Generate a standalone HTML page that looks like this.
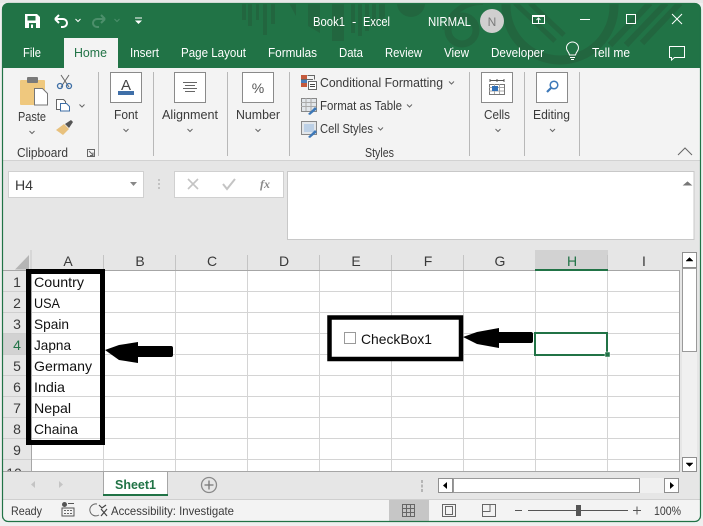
<!DOCTYPE html>
<html><head><meta charset="utf-8"><style>
html,body{margin:0;padding:0;background:#efefef;width:703px;height:526px;overflow:hidden}
svg{display:block;position:absolute;left:0;top:0}
text{font-family:"Liberation Sans",sans-serif;font-size:13px;fill:#3a3a3a}
.w{fill:#fff}.c{fill:#111;font-size:14px}.h{fill:#3a3a3a;font-size:14px;text-anchor:middle}
.g{stroke:#d4d4d4;stroke-width:1;fill:none}
.sep{stroke:#b8b8b8;stroke-width:1}
.btn{fill:#fff;stroke:#8a8a8a;stroke-width:1}
.chev{fill:none;stroke:#666;stroke-width:1}
.ic{fill:none;stroke:#666;stroke-width:1}
.wl{fill:none;stroke:#fff;stroke-width:1}
</style></head><body>
<svg width="703" height="526" viewBox="0 0 703 526" xmlns="http://www.w3.org/2000/svg">
<defs><clipPath id="tb"><rect x="2" y="3" width="699" height="66" rx="6"/></clipPath></defs>
<rect width="703" height="526" fill="#efefef"/>
<rect x="0" y="0" width="703" height="3" fill="#e8e8e8"/>
<rect x="2" y="3" width="699" height="519" rx="6" fill="#217346"/>
<rect x="3" y="68" width="697" height="452" fill="#e6e6e6"/>
<!-- title pattern -->
<g clip-path="url(#tb)">
<g fill="#22663f">
<rect x="242" y="3" width="4" height="17"/><rect x="248" y="3" width="4" height="23"/><rect x="256" y="3" width="3" height="17"/><rect x="263" y="3" width="4" height="32"/><rect x="271" y="3" width="4" height="21"/>
<path d="M289 3h7v13zM308 3h12v30l-12-7zM332 3h12v38h-12zM351 3h4v30h-4zM358 3h4v33h-4zM365 3h4v28h-4zM372 3h4v24h-4zM379 3h6v14l-6 5z"/>
<circle cx="411" cy="3" r="14"/>
</g>
<g fill="none" stroke="#22663f">
<circle cx="560" cy="6" r="54" stroke-width="9"/>
<circle cx="462" cy="30" r="14" stroke-width="7"/>
<path d="M445 30a38 38 0 0 1 38-28" stroke-width="6"/>
<path d="M515 3l40 38M530 3l34 32" stroke-width="5"/>
<path d="M650 3l-40 42M666 3l-40 42M680 3l-38 40" stroke-width="6"/>
</g>
</g>
<!-- QAT -->
<path d="M25 14h12l3 3v11h-15z" fill="#fff"/>
<rect x="27.500" y="16" width="8" height="4.500" fill="#217346"/><rect x="29" y="23" width="7" height="5" fill="#217346"/><rect x="31" y="24.500" width="2" height="3.500" fill="#fff"/>
<path d="M55 19h8a4 4 0 0 1 0 8h-2M55 19l4-4M55 19l4 4" fill="none" stroke="#fff" stroke-width="2"/>
<path d="M75.500 19l2.500 2.500 2.500-2.500" class="wl"/>
<path d="M105 19h-8a4 4 0 0 0 0 8h2M105 19l-4-4M105 19l-4 4" fill="none" stroke="#4c8f6b" stroke-width="2"/>
<path d="M114.500 19l2.500 2.500 2.500-2.500" fill="none" stroke="#4c8f6b"/>
<path d="M135 18h7" stroke="#fff"/><path d="M135 20.500h7l-3.500 3.500z" fill="#fff"/>
<text class="w" x="313" y="26" textLength="32" lengthAdjust="spacingAndGlyphs">Book1</text>
<text class="w" x="352" y="26">-</text>
<text class="w" x="363" y="26" textLength="27" lengthAdjust="spacingAndGlyphs">Excel</text>
<text class="w" x="428" y="26" textLength="43" lengthAdjust="spacingAndGlyphs">NIRMAL</text>
<circle cx="492" cy="21" r="12" fill="#d0cfcf"/>
<text x="492" y="26" text-anchor="middle" style="font-size:12px;fill:#7a7a7a">N</text>
<!-- window controls -->
<rect x="532.500" y="15.500" width="12" height="8" class="wl"/><path d="M532 16.500h13M538.500 23v-5M536.500 20l2-2 2 2" class="wl"/>
<path d="M580 19.500h10" class="wl"/>
<rect x="626.500" y="14.500" width="9" height="9" class="wl"/>
<path d="M672 14l10 10M682 14l-10 10" class="wl"/>
<!-- tabs -->
<rect x="64" y="38" width="54" height="31" fill="#f3f3f3"/>
<text class="w" x="23" y="57" textLength="18" lengthAdjust="spacingAndGlyphs">File</text>
<text x="74" y="57" textLength="33" lengthAdjust="spacingAndGlyphs" style="fill:#217346">Home</text>
<text class="w" x="130" y="57" textLength="29" lengthAdjust="spacingAndGlyphs">Insert</text>
<text class="w" x="181" y="57" textLength="65" lengthAdjust="spacingAndGlyphs">Page Layout</text>
<text class="w" x="268" y="57" textLength="49" lengthAdjust="spacingAndGlyphs">Formulas</text>
<text class="w" x="339" y="57" textLength="24" lengthAdjust="spacingAndGlyphs">Data</text>
<text class="w" x="385" y="57" textLength="37" lengthAdjust="spacingAndGlyphs">Review</text>
<text class="w" x="444" y="57" textLength="25" lengthAdjust="spacingAndGlyphs">View</text>
<text class="w" x="491" y="57" textLength="53" lengthAdjust="spacingAndGlyphs">Developer</text>
<text class="w" x="592" y="57" textLength="38" lengthAdjust="spacingAndGlyphs">Tell me</text>
<path d="M569.500 55c-.5-3-3-4-3-7a6 6 0 0 1 12 0c0 3-2.500 4-3 7zM570 57.500h5M571 59.500h3" class="wl"/>
<path d="M669.500 46.500h15v11h-10l-3 2.500v-2.500h-2z" class="wl"/>
<!-- ribbon -->
<rect x="3" y="68" width="697" height="92" fill="#f3f3f3"/>
<path d="M3 160.500h697" stroke="#d2d2d2"/>
<g class="sep"><path d="M98.500 72v84M153.500 72v84M227.500 72v84M289.500 72v84M469.500 72v84M524.500 72v84M579.500 72v84"/></g>
<!-- paste -->
<rect x="20" y="80" width="25" height="25" rx="1" fill="#efc87e"/>
<rect x="27" y="77" width="11" height="6" rx="1" fill="#7a7a7a"/>
<path d="M34.500 88.500h8l5 5v11.500h-13z" fill="#fff" stroke="#777"/>
<path d="M61 75l8 12M69 75l-8 12" stroke="#666" fill="none"/><circle cx="60" cy="86" r="2.500" fill="none" stroke="#3d6ea5" stroke-width="1.300"/><circle cx="69" cy="86" r="2.500" fill="none" stroke="#3d6ea5" stroke-width="1.300"/>
<path d="M56.500 99.500h7l2 2v8h-9z" fill="#fff" stroke="#666"/><path d="M60.500 103.500h6l3 3v4.500h-9z" fill="#fff" stroke="#3d6ea5"/>
<path d="M79.500 104.500l2.500 2.500 2.500-2.500" class="chev"/>
<path d="M56 130l8-6 5 5-6 6z" fill="#e8c17d"/><path d="M65 124l6-4 2 2-4 6z" fill="#555"/>
<text x="18" y="121" textLength="28" lengthAdjust="spacingAndGlyphs">Paste</text>
<path d="M29.500 131l2.500 2.500 2.500-2.500" class="chev"/>
<text x="17" y="157" textLength="51" lengthAdjust="spacingAndGlyphs">Clipboard</text>
<path d="M87.500 149.500h7v7h-7zM89 151l4 4M93 152.500v3h-3" class="ic"/>
<!-- font -->
<rect class="btn" x="110.500" y="72.500" width="31" height="30"/>
<text x="126" y="90" text-anchor="middle" style="font-size:15px;fill:#444">A</text>
<rect x="118" y="91" width="16" height="4" fill="#3f6fa8"/>
<text x="114" y="119" textLength="24" lengthAdjust="spacingAndGlyphs">Font</text>
<path d="M123.500 129l2.500 2.500 2.500-2.500" class="chev"/>
<!-- alignment -->
<rect class="btn" x="174.500" y="72.500" width="31" height="30"/>
<path d="M183 82.500h14M185 85.500h10M183 88.500h14M185 91.500h10" class="ic"/>
<text x="162" y="119" textLength="56" lengthAdjust="spacingAndGlyphs">Alignment</text>
<path d="M187.500 129l2.500 2.500 2.500-2.500" class="chev"/>
<!-- number -->
<rect class="btn" x="242.500" y="72.500" width="31" height="30"/>
<text x="258" y="93" text-anchor="middle" style="font-size:14px;fill:#555">%</text>
<text x="236" y="119" textLength="44" lengthAdjust="spacingAndGlyphs">Number</text>
<path d="M255.500 129l2.500 2.500 2.500-2.500" class="chev"/>
<!-- styles -->
<rect x="301" y="75" width="6" height="4" fill="#c55a3c"/><rect x="301" y="79" width="6" height="4" fill="#4a7ebb"/><rect x="301" y="83" width="6" height="4" fill="#c55a3c"/>
<path d="M307.500 75.500h7v4M301 79.500h12" class="ic"/><rect x="308.500" y="81.500" width="8" height="8" fill="#fff" stroke="#666"/><path d="M310 84.500h5M310 86.500h5" stroke="#444"/>
<rect x="301.500" y="98.500" width="15" height="13" fill="#e2e6ea" stroke="#888"/><path d="M306 98v13M311 98v13M301 102.500h15M301 106.500h15" stroke="#aaa"/><path d="M308 114l7-7 2 2-7 6z" fill="#3d78b8"/>
<rect x="301.500" y="121.500" width="15" height="13" fill="#e2e6ea" stroke="#888"/><rect x="304" y="124" width="10" height="8" fill="#bcd0e6"/><path d="M308 137l7-7 2 2-7 6z" fill="#3d78b8"/>
<text x="320" y="87" textLength="123" lengthAdjust="spacingAndGlyphs">Conditional Formatting</text>
<path d="M449 81.500l2.500 2.500 2.500-2.500" class="chev"/>
<text x="320" y="110" textLength="82" lengthAdjust="spacingAndGlyphs">Format as Table</text>
<path d="M407 104.500l2.500 2.500 2.500-2.500" class="chev"/>
<text x="320" y="133" textLength="53" lengthAdjust="spacingAndGlyphs">Cell Styles</text>
<path d="M378 127.500l2.500 2.500 2.500-2.500" class="chev"/>
<text x="365" y="157" textLength="29" lengthAdjust="spacingAndGlyphs">Styles</text>
<!-- cells -->
<rect class="btn" x="481.500" y="72.500" width="31" height="30"/>
<rect x="489.500" y="84.500" width="15" height="10" fill="#fff" stroke="#777"/><path d="M494.500 84v10M499.500 84v10M489 87.500h15M489 91h15" stroke="#aaa"/><rect x="492" y="86" width="6" height="5" fill="#2f6fb7"/><path d="M490 80.500h14M490 79v3M504 79v3M497 79v3" stroke="#555"/>
<text x="484" y="119" textLength="26" lengthAdjust="spacingAndGlyphs">Cells</text>
<path d="M495.500 129l2.500 2.500 2.500-2.500" class="chev"/>
<!-- editing -->
<rect class="btn" x="536.500" y="72.500" width="31" height="30"/>
<circle cx="554" cy="85" r="3.800" fill="none" stroke="#3d78b8" stroke-width="1.500"/><path d="M551 88l-4 4" stroke="#3d78b8" stroke-width="2.200"/>
<text x="533" y="119" textLength="37" lengthAdjust="spacingAndGlyphs">Editing</text>
<path d="M550 129l2.500 2.500 2.500-2.500" class="chev"/>
<path d="M678 155l7-7 7 7" class="ic"/>
<!-- formula bar -->
<rect x="8.500" y="171.500" width="135" height="26" fill="#fff" stroke="#d0d0d0"/>
<text x="15" y="190" style="font-size:13.500px" textLength="18" lengthAdjust="spacingAndGlyphs">H4</text>
<path d="M130 182h7l-3.500 4z" fill="#888"/>
<path d="M159 179v2M159 183v2M159 187v2" stroke="#b5b5b5" stroke-width="1.500"/>
<rect x="174.500" y="171.500" width="109" height="26" fill="#fff" stroke="#d0d0d0"/>
<path d="M188 179l10 10M198 179l-10 10" stroke="#c4c4c4" stroke-width="1.600" fill="none"/>
<path d="M223 184l4 5 8-10" stroke="#c4c4c4" stroke-width="2" fill="none"/>
<text x="260" y="188" style="font-family:'Liberation Serif',serif;font-style:italic;font-weight:bold;font-size:12px;fill:#8a8a8a">fx</text>
<rect x="287.500" y="171.500" width="406.500" height="68" fill="#fff" stroke="#c8c8c8"/>
<path d="M684 185l3.500-3 3.500 3z" fill="#777" stroke="#777"/>
<!-- grid -->
<rect x="3" y="250" width="677" height="221" fill="#e6e6e6"/>
<rect x="32" y="271" width="647" height="200" fill="#fff"/>
<path d="M31 250v20" stroke="#c8c8c8"/>
<path d="M29 255v14.500h-14z" fill="#b5b5b5"/>
<rect x="535" y="250" width="73" height="20" fill="#d2d2d2"/>
<g class="g">
<path d="M103.500 271v200M175.500 271v200M247.500 271v200M319.500 271v200M391.500 271v200M463.500 271v200M535.500 271v200M607.500 271v200"/>
<path d="M32 291.500h647M32 312.500h647M32 333.500h647M32 354.500h647M32 375.500h647M32 396.500h647M32 417.500h647M32 438.500h647M32 459.500h647"/>
<path d="M3 291.500h28M3 312.500h28M3 333.500h28M3 354.500h28M3 375.500h28M3 396.500h28M3 417.500h28M3 438.500h28M3 459.500h28" stroke="#cfcfcf"/>
</g>
<path d="M103.500 255v15M175.500 255v15M247.500 255v15M319.500 255v15M391.500 255v15M463.500 255v15M607.500 255v15" stroke="#c4c4c4"/>
<rect x="3" y="334" width="28" height="20" fill="#d2d2d2"/>
<rect x="30" y="334" width="2" height="20" fill="#217346"/>
<path d="M3 270.500h677M31.500 270v201M679.500 270v201" stroke="#a6a6a6" fill="none"/>
<rect x="535" y="269" width="73" height="2" fill="#217346"/>
<text class="h" x="68" y="266">A</text><text class="h" x="140" y="266">B</text><text class="h" x="212" y="266">C</text><text class="h" x="284" y="266">D</text><text class="h" x="356" y="266">E</text><text class="h" x="428" y="266">F</text><text class="h" x="500" y="266">G</text><text class="h" x="572" y="266" style="fill:#217346">H</text><text class="h" x="644" y="266">I</text>
<text class="h" x="17" y="287">1</text><text class="h" x="17" y="308">2</text><text class="h" x="17" y="329">3</text><text class="h" x="17" y="350" style="fill:#217346">4</text><text class="h" x="17" y="371">5</text><text class="h" x="17" y="392">6</text><text class="h" x="17" y="413">7</text><text class="h" x="17" y="434">8</text><text class="h" x="17" y="455">9</text>
<svg x="3" y="460" width="28" height="11" viewBox="3 460 28 11" overflow="hidden"><text class="h" x="14" y="478">10</text></svg>
<text class="c" x="34" y="287" textLength="50" lengthAdjust="spacingAndGlyphs">Country</text>
<text class="c" x="34" y="308" textLength="26" lengthAdjust="spacingAndGlyphs">USA</text>
<text class="c" x="34" y="329" textLength="35" lengthAdjust="spacingAndGlyphs">Spain</text>
<text class="c" x="34" y="350" textLength="37" lengthAdjust="spacingAndGlyphs">Japna</text>
<text class="c" x="34" y="371" textLength="58" lengthAdjust="spacingAndGlyphs">Germany</text>
<text class="c" x="34" y="392" textLength="31" lengthAdjust="spacingAndGlyphs">India</text>
<text class="c" x="34" y="413" textLength="37" lengthAdjust="spacingAndGlyphs">Nepal</text>
<text class="c" x="34" y="434" textLength="44" lengthAdjust="spacingAndGlyphs">Chaina</text>
<!-- selection -->
<rect x="535" y="333" width="72" height="22" fill="none" stroke="#217346" stroke-width="2"/>
<rect x="605" y="352" width="5" height="5" fill="#217346" stroke="#fff" stroke-width=".5"/>
<!-- annotation boxes -->
<rect x="28.500" y="271.500" width="74" height="171" fill="none" stroke="#000" stroke-width="5"/>
<rect x="329.500" y="317.500" width="131.500" height="41.500" fill="#fff" stroke="#000" stroke-width="4.500"/>
<rect x="344.500" y="332.500" width="11" height="11" fill="#fff" stroke="#9a9a9a"/>
<text class="c" x="361" y="344" textLength="71" lengthAdjust="spacingAndGlyphs">CheckBox1</text>
<!-- arrows -->
<path d="M105 350l14-5 19-3v4h33q2 0 2 2v7q0 2-2 2h-33v6l-19-3z" fill="#000"/>
<path d="M463 337l14-5 22-4v4h32q2 0 2 2v7q0 2-2 2h-32v5l-22-4z" fill="#000"/>
<!-- v scroll -->
<rect x="680" y="250" width="20" height="222" fill="#e6e6e6"/>
<rect x="682" y="252" width="15" height="220" fill="#f0f0f0"/>
<rect x="682.500" y="252.500" width="14" height="15" fill="#fff" stroke="#8f8f8f"/>
<path d="M686 261l3.500-3.500 3.500 3.500z" fill="#000" stroke="#000" stroke-width=".5"/>
<rect x="682.500" y="268.500" width="14" height="83" fill="#fff" stroke="#9a9a9a"/>
<rect x="682.500" y="457.500" width="14" height="14" fill="#fff" stroke="#8f8f8f"/>
<path d="M686 463l3.500 3.500 3.500-3.500z" fill="#000" stroke="#000" stroke-width=".5"/>
<!-- tabs bar -->
<rect x="3" y="472" width="697" height="27" fill="#e6e6e6"/>
<path d="M3 471.500h677" stroke="#a6a6a6"/>
<path d="M103.500 471v25M167.500 471v25" stroke="#a6a6a6"/>
<rect x="104" y="472" width="63" height="22" fill="#fff"/>
<rect x="103" y="494" width="65" height="2" fill="#217346"/>
<text x="115" y="489" textLength="41" lengthAdjust="spacingAndGlyphs" style="font-weight:bold;fill:#217346">Sheet1</text>
<path d="M35 481v7l-4-3.500z" fill="#c4c4c4"/><path d="M59 481v7l4-3.500z" fill="#c4c4c4"/>
<circle cx="209" cy="485" r="7.500" fill="none" stroke="#8a8a8a" stroke-width="1.300"/><path d="M204.500 485h9M209 480.500v9" stroke="#777" stroke-width="1.300"/>
<path d="M422 480v3M422 484.500v3M422 489v3" stroke="#b5b5b5" stroke-width="2"/>
<rect x="438" y="478" width="241" height="15" fill="#f0f0f0"/>
<rect x="438.500" y="478.500" width="14" height="14" fill="#fff" stroke="#8f8f8f"/>
<path d="M447 482v7l-4-3.500z" fill="#000"/>
<rect x="453.500" y="478.500" width="186" height="14" fill="#fff" stroke="#9a9a9a"/>
<rect x="664.500" y="478.500" width="14" height="14" fill="#fff" stroke="#8f8f8f"/>
<path d="M670 482v7l4-3.500z" fill="#000"/>
<!-- status -->
<path d="M3 500h697v16a5 5 0 0 1-5 5h-687a5 5 0 0 1-5-5z" fill="#f3f3f3"/>
<path d="M3 499.500h697" stroke="#cfcfcf"/>
<text x="11" y="515" textLength="31" lengthAdjust="spacingAndGlyphs" style="font-size:12px">Ready</text>
<circle cx="64.500" cy="504.500" r="2.500" fill="#555"/><path d="M68 503.500h6M62 508h12v8h-12z" stroke="#555" fill="none"/><path d="M64 510.500h8M64 513.500h8" stroke="#666" stroke-dasharray="2 1"/>
<path d="M97 504a6 6 0 1 0 2 11" fill="none" stroke="#666"/><path d="M99 505l3 3 4-3M101 509l6 7M107 509l-6 7" fill="none" stroke="#444" stroke-width="1.200"/>
<text x="111" y="515" textLength="123" lengthAdjust="spacingAndGlyphs" style="font-size:12px">Accessibility: Investigate</text>
<rect x="389" y="500" width="40" height="21" fill="#c6c6c6"/>
<path d="M402.500 504.500h12v12h-12zM406.500 504v13M410.500 504v13M402 508.500h13M402 512.500h13" class="ic"/>
<rect x="442.500" y="504.500" width="13" height="12" class="ic"/><rect x="445.500" y="506.500" width="7" height="8" class="ic"/>
<path d="M482.500 504.500h13v12h-13zM482 511.500h8v-7" class="ic"/>
<path d="M515 510.500h7M528 510.500h100M633 510.500h8M637 506.500v8" stroke="#555"/>
<rect x="576" y="505" width="5" height="11" fill="#555"/>
<text x="654" y="515" textLength="27" lengthAdjust="spacingAndGlyphs" style="font-size:12px">100%</text>
<!-- window edge -->
<rect x="2.500" y="3.500" width="698" height="518" rx="6" fill="none" stroke="#217346" stroke-width="1.200"/>
</svg>
</body></html>
